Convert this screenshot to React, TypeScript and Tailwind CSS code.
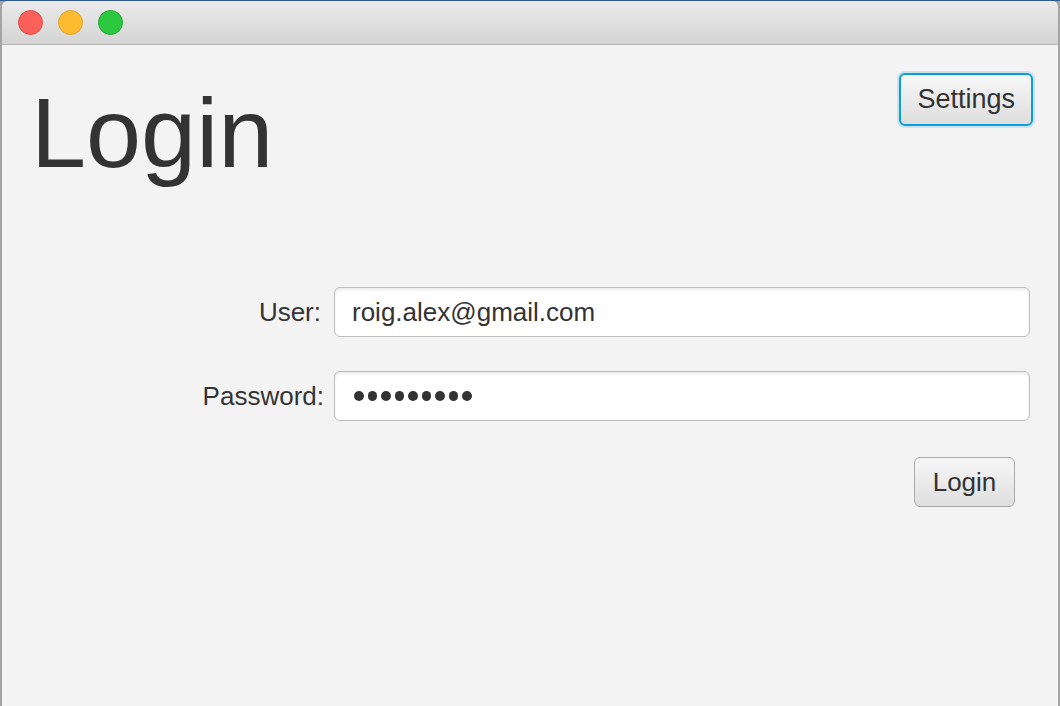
import React from "react";

export default function App() {
  return (
    <div
      className="w-[1060px] h-[706px] overflow-hidden bg-[#a4a4a4] flex flex-col"
      style={{ fontFamily: '"Liberation Sans", Arial, sans-serif' }}
    >
      <div className="h-[1px] bg-[#2d5a97] shrink-0" />
      <div className="flex-1 ml-[2px] mr-[2px] flex flex-col rounded-t-[6px] overflow-hidden bg-[#f3f3f3]">
        {/* title bar */}
        <div className="h-[44px] shrink-0 flex items-center gap-[15px] pl-[16px] bg-gradient-to-b from-[#ebebeb] to-[#d4d4d4] border-b border-[#b4b4b4]">
          <div className="w-[25px] h-[25px] rounded-full bg-[#fc605b] border border-[#de4a44]" />
          <div className="w-[25px] h-[25px] rounded-full bg-[#fdbc30] border border-[#dea42a]" />
          <div className="w-[25px] h-[25px] rounded-full bg-[#2bc840] border border-[#1eab2e]" />
        </div>

        {/* content */}
        <div className="flex-1 flex flex-col text-[#333333]">
          <div className="flex justify-between items-start pl-[29px] pr-[25px]">
            <h1 className="mt-[38px] text-[99px] leading-[100px] font-normal">
              Login
            </h1>
            <button className="mt-[28px] h-[53px] px-[16px] rounded-[6px] border-[2px] border-[#0e9ed6] shadow-[0_0_0_2px_rgba(120,200,235,0.35)] bg-gradient-to-b from-[#f7f7f7] to-[#dedede] text-[27px] leading-none text-[#333333]">
              Settings
            </button>
          </div>

          <div className="mt-[104px] grid grid-cols-[300px_1fr] gap-x-[10px] gap-y-[34px] pl-[22px] pr-[28px] items-center">
            <label className="text-right text-[26px] leading-none pr-[3px]">User:</label>
            <div className="h-[50px] rounded-[6px] border border-[#bdbdbd] bg-white shadow-[inset_0_2px_3px_rgba(0,0,0,0.08)] flex items-center pl-[17px] text-[26px]">
              roig.alex@gmail.com
            </div>
            <label className="text-right text-[26px] leading-none">Password:</label>
            <div className="h-[50px] rounded-[6px] border border-[#bdbdbd] bg-white shadow-[inset_0_2px_3px_rgba(0,0,0,0.08)] flex items-center pl-[19px] gap-[4px]">
              {Array.from({ length: 9 }).map((_, i) => (
                <span key={i} className="w-[9.5px] h-[9.5px] rounded-full bg-[#333333]" />
              ))}
            </div>
          </div>

          <div className="mt-[36px] flex justify-end pr-[43px]">
            <button className="h-[50px] w-[101px] rounded-[6px] border border-[#a9a9a9] bg-gradient-to-b from-[#f7f7f7] to-[#dedede] text-[26px] leading-none text-[#333333]">
              Login
            </button>
          </div>
        </div>
      </div>
    </div>
  );
}
